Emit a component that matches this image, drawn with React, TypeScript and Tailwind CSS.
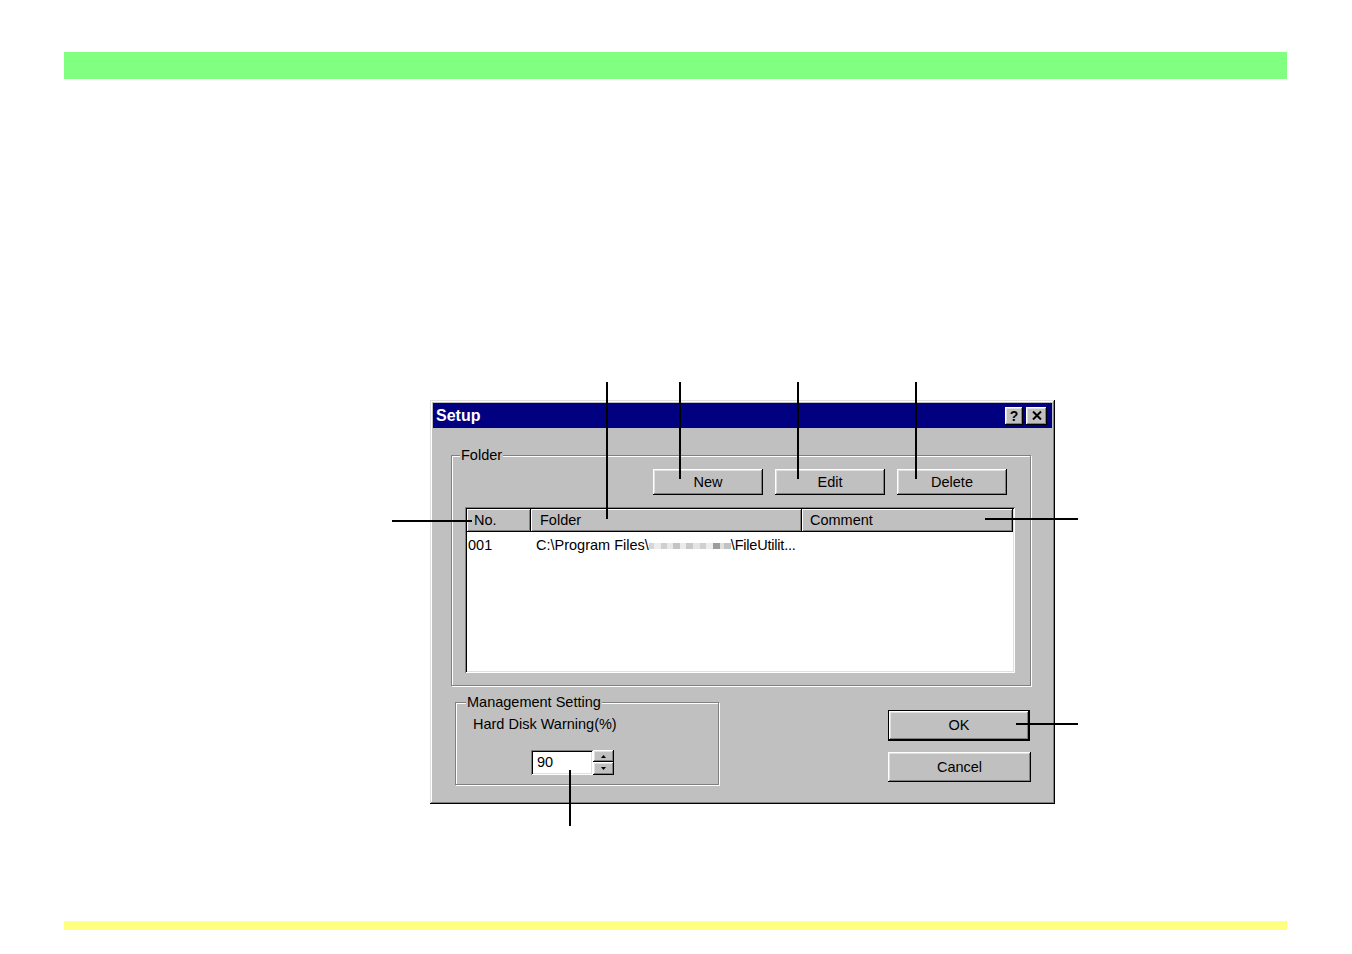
import React from "react";

const raised =
	"bg-[#c0c0c0] shadow-[inset_-1px_-1px_0_#000000,inset_1px_1px_0_#ffffff,inset_-2px_-2px_0_#808080,inset_2px_2px_0_#dfdfdf]";
const sunken =
	"shadow-[inset_1px_1px_0_#808080,inset_-1px_-1px_0_#ffffff,inset_2px_2px_0_#000000,inset_-2px_-2px_0_#dfdfdf]";
const etched =
	"border border-[#808080] shadow-[inset_1px_1px_0_#ffffff,1px_1px_0_#ffffff]";

const Button = ({ label, className = "" }: { label: string; className?: string }) => (
	<div className={`${raised} flex items-center justify-center ${className}`}>
		<span className="leading-none">{label}</span>
	</div>
);

const GroupBox = ({
	title,
	className,
	left,
	children,
}: {
	title: string;
	className: string;
	left: string;
	children?: React.ReactNode;
}) => (
	<div className={`relative ${etched} ${className}`}>
		<span className={`absolute -top-[10px] ${left} bg-[#c0c0c0] px-[1px] leading-[18px]`}>
			{title}
		</span>
		{children}
	</div>
);

const blur: [number, string][] = [
	[5, "#d6d6d6"],
	[7, "#ececec"],
	[6, "#cfcfcf"],
	[6, "#e8e8e8"],
	[7, "#c4c4c4"],
	[6, "#ebebeb"],
	[7, "#c8c8c8"],
	[7, "#e4e4e4"],
	[6, "#d0d0d0"],
	[7, "#ededed"],
	[7, "#9d9d9d"],
	[4, "#e0e0e0"],
	[7, "#c2c2c2"],
];

const HeaderCell = ({ label, w, pl }: { label: string; w: string; pl: string }) => (
	<div
		className={`${w} ${pl} h-full flex items-center pt-[1px] bg-[#c0c0c0] shadow-[inset_-1px_-1px_0_#000000,inset_1px_1px_0_#ffffff,inset_-2px_-2px_0_#808080]`}
	>
		{label}
	</div>
);

const Line = ({ className }: { className: string }) => (
	<div className={`absolute bg-black ${className}`} />
);

export default function App() {
	return (
		<div
			className="relative w-[1352px] h-[954px] bg-white overflow-hidden text-black text-[14.5px]"
			style={{ fontFamily: '"Liberation Sans", Arial, sans-serif' }}
		>
			<div className="ml-[64px] mt-[52px] w-[1223px] h-[27px] bg-[#80ff80]" />

			<div
				className={`ml-[430px] mt-[321px] w-[625px] h-[404px] flex flex-col bg-[#c0c0c0] shadow-[inset_-1px_-1px_0_#000000,inset_1px_1px_0_#dfdfdf,inset_-2px_-2px_0_#808080,inset_2px_2px_0_#ffffff]`}
			>
				<div className="mt-[3px] mx-[3px] h-[25px] bg-[#000080] flex items-center pl-[3px]">
					<span className="text-white font-bold text-[16px] leading-none pt-[1px]">Setup</span>
					<div className="ml-auto mr-[5px] flex items-center gap-[3px]">
						<div className={`${raised} w-[18px] h-[18px] flex items-center justify-center`}>
							<span className="font-bold text-[14px] leading-none">?</span>
						</div>
						<div className={`${raised} w-[21px] h-[18px] flex items-center justify-center`}>
							<svg width="10" height="9" viewBox="0 0 10 9">
								<path d="M1 0.5 L9 8.5 M9 0.5 L1 8.5" stroke="#000" strokeWidth="2" />
							</svg>
						</div>
					</div>
				</div>

				<GroupBox title="Folder" left="left-[8px]" className="mt-[27px] ml-[21px] w-[580px] h-[231px]">
					<div className="flex gap-[12px] pl-[201px] pt-[13px]">
						<Button label="New" className="w-[110px] h-[26px]" />
						<Button label="Edit" className="w-[110px] h-[26px]" />
						<Button label="Delete" className="w-[110px] h-[26px]" />
					</div>
					<div className={`mt-[12px] ml-[13px] w-[550px] h-[166px] bg-white p-[2px] ${sunken}`}>
						<div className="flex h-[23px]">
							<HeaderCell label="No." w="w-[64px]" pl="pl-[7px]" />
							<HeaderCell label="Folder" w="w-[271px]" pl="pl-[9px]" />
							<HeaderCell label="Comment" w="w-[211px]" pl="pl-[8px]" />
						</div>
						<div className="mt-[5px] flex items-center h-[18px] whitespace-nowrap">
							<span className="w-[64px] pl-[1px]">001</span>
							<span className="pl-[5px]">C:\Program Files\</span>
							<span className="flex items-center h-[6px]">
								{blur.map(([w, c], i) => (
									<span key={i} className="h-full" style={{ width: w, background: c }} />
								))}
							</span>
							<span className="tracking-[-0.2px]">\FileUtilit...</span>
						</div>
					</div>
				</GroupBox>

				<div className="flex mt-[16px]">
					<GroupBox
						title="Management Setting"
						left="left-[10px]"
						className="ml-[25px] w-[264px] h-[83px]"
					>
						<div className="pl-[17px] pt-[12px] leading-[18px]">Hard Disk Warning(%)</div>
						<div className="flex mt-[17px] pl-[75px]">
							<div className={`w-[62px] h-[25px] bg-white flex items-center pl-[6px] ${sunken}`}>
								90
							</div>
							<div className="w-[21px] h-[25px] flex flex-col">
								<div className={`${raised} h-[12px] flex items-center justify-center`}>
									<svg width="5" height="3" viewBox="0 0 5 3">
										<path d="M2.5 0 L5 3 L0 3 Z" fill="#000" />
									</svg>
								</div>
								<div className={`${raised} h-[13px] flex items-center justify-center`}>
									<svg width="5" height="3" viewBox="0 0 5 3">
										<path d="M0 0 L5 0 L2.5 3 Z" fill="#000" />
									</svg>
								</div>
							</div>
						</div>
					</GroupBox>

					<div className="ml-[169px] mt-[8px] flex flex-col gap-[11px]">
						<div className="w-[142px] h-[31px] border border-black">
							<Button label="OK" className="w-full h-full" />
						</div>
						<Button label="Cancel" className="w-[143px] h-[30px]" />
					</div>
				</div>
			</div>

			<div className="ml-[64px] mt-[117px] w-[1223px] h-[9px] bg-[#ffff80]" />

			<Line className="left-[606px] top-[382px] w-[2px] h-[137px]" />
			<Line className="left-[679px] top-[382px] w-[2px] h-[97px]" />
			<Line className="left-[797px] top-[382px] w-[2px] h-[97px]" />
			<Line className="left-[915px] top-[382px] w-[2px] h-[97px]" />
			<Line className="left-[392px] top-[520px] w-[80px] h-[2px]" />
			<Line className="left-[985px] top-[518px] w-[93px] h-[2px]" />
			<Line className="left-[1016px] top-[723px] w-[62px] h-[2px]" />
			<Line className="left-[569px] top-[770px] w-[2px] h-[56px]" />
		</div>
	);
}
